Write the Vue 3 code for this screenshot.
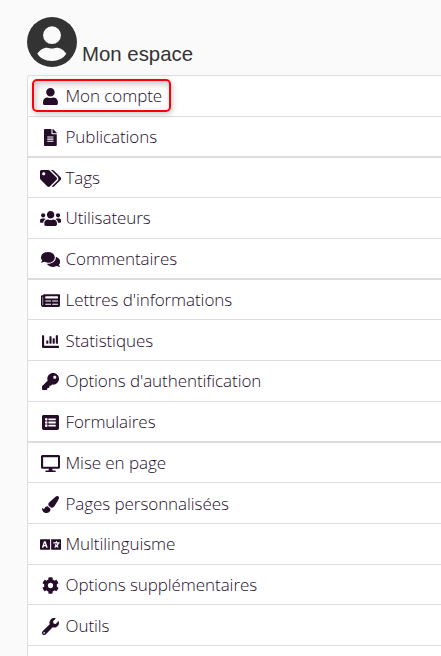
<template>
  <div class="page">
    <header class="header">
      <svg class="avatar" viewBox="0 0 50 50">
        <circle cx="25" cy="25" r="25" fill="#333" />
        <circle cx="25" cy="18.2" r="8.9" fill="#fafafa" />
        <path d="M10.300 36.800C12.500 33.200 16 30.700 20 30.700c2 0 3 .8 4.800 .8s2.800-.8 4.800-.8c4 0 7.500 2.500 9.700 6.100C36.500 41.300 31.500 44 24.800 44S13.100 41.300 10.300 36.800z" fill="#fafafa" />
      </svg>
      <h1 class="title">Mon espace</h1>
    </header>

    <nav class="list-group">
      <a
        v-for="item in items"
        :key="item.label"
        href="#"
        :class="['list-item', { thick: item.thick, short: item.short, low: item.low }]"
        @click.prevent="current = item.label"
      >
        <span :class="['entry', { highlight: item.label === current }]">
          <span class="icon">
            <svg :viewBox="`0 0 ${item.width} 512`" :style="{ width: item.width / 512 + 'em' }">
              <path :d="item.path" />
            </svg>
          </span>
          <span class="label">{{ item.label }}</span>
        </span>
      </a>
    </nav>
  </div>
</template>

<script setup>
import { ref } from 'vue'

const current = ref('Mon compte')

const items = [
  {
    label: 'Mon compte',
    width: 448,
    path: 'M224 256c70.7 0 128-57.3 128-128S294.7 0 224 0 96 57.3 96 128s57.3 128 128 128zm89.600 32h-16.700c-22.200 10.200-46.900 16-72.900 16s-50.600-5.800-72.900-16h-16.700C60.200 288 0 348.200 0 422.400V464c0 26.500 21.500 48 48 48h352c26.500 0 48-21.500 48-48v-41.600c0-74.200-60.200-134.400-134.400-134.400z'
  },
  {
    label: 'Publications',
    width: 384,
    thick: true,
    path: 'M224 136V0H24C10.7 0 0 10.7 0 24v464c0 13.3 10.7 24 24 24h336c13.3 0 24-10.7 24-24V160H248c-13.2 0-24-10.8-24-24zm64 236c0 6.6-5.4 12-12 12H108c-6.6 0-12-5.4-12-12v-8c0-6.6 5.4-12 12-12h168c6.6 0 12 5.4 12 12v8zm0-64c0 6.6-5.4 12-12 12H108c-6.6 0-12-5.4-12-12v-8c0-6.6 5.4-12 12-12h168c6.6 0 12 5.4 12 12v8zm0-72v8c0 6.6-5.4 12-12 12H108c-6.6 0-12-5.4-12-12v-8c0-6.6 5.4-12 12-12h168c6.6 0 12 5.4 12 12zm96-114.1v6.1H256V0h6.1c6.4 0 12.5 2.5 17 7l97.9 98c4.5 4.5 7 10.6 7 16.9z'
  },
  {
    label: 'Tags',
    width: 640,
    short: true,
    path: 'M497.941 225.941L286.059 14.059A48 48 0 0 0 252.118 0H48C21.49 0 0 21.49 0 48v204.118a48 48 0 0 0 14.059 33.941l211.882 211.882c18.744 18.745 49.136 18.746 67.882 0l204.118-204.118c18.745-18.745 18.745-49.137 0-67.882zM112 160c-26.51 0-48-21.49-48-48s21.49-48 48-48 48 21.49 48 48-21.49 48-48 48zm513.941 133.823L421.823 497.941c-18.745 18.745-49.137 18.745-67.882 0l-.36-.36L527.64 323.522c16.999-16.999 26.36-39.6 26.36-63.64s-9.362-46.641-26.36-63.64L331.397 0h48.721a48 48 0 0 1 33.941 14.059l211.882 211.882c18.745 18.745 18.745 49.137 0 67.882z'
  },
  {
    label: 'Utilisateurs',
    width: 640,
    path: 'M96 224c35.3 0 64-28.7 64-64s-28.7-64-64-64-64 28.7-64 64 28.7 64 64 64zm448 0c35.3 0 64-28.7 64-64s-28.7-64-64-64-64 28.7-64 64 28.7 64 64 64zm32 32h-64c-17.6 0-33.5 7.1-45.1 18.6 40.3 22.1 68.9 62 75.1 109.4h66c17.7 0 32-14.3 32-32v-32c0-35.3-28.7-64-64-64zm-256 0c61.9 0 112-50.1 112-112S381.9 32 320 32 208 82.1 208 144s50.1 112 112 112zm76.8 32h-8.3c-20.8 10-43.9 16-68.5 16s-47.6-6-68.5-16h-8.3C179.6 288 128 339.6 128 403.2V432c0 26.5 21.5 48 48 48h288c26.5 0 48-21.5 48-48v-28.8c0-63.6-51.6-115.2-115.2-115.2zm-223.7-13.4C161.5 263.1 145.6 256 128 256H64c-35.3 0-64 28.7-64 64v32c0 17.7 14.3 32 32 32h65.9c6.3-47.4 34.9-87.3 75.2-109.4z'
  },
  {
    label: 'Commentaires',
    width: 576,
    thick: true,
    path: 'M416 192c0-88.4-93.1-160-208-160S0 103.6 0 192c0 34.3 14.1 65.9 38 92-13.4 30.2-35.5 54.2-35.8 54.5-2.2 2.3-2.8 5.7-1.5 8.7S4.8 352 8 352c36.6 0 66.9-12.3 88.7-25 32.2 15.7 70.3 25 111.3 25 114.9 0 208-71.6 208-160zm122 220c23.9-26 38-57.7 38-92 0-66.9-53.5-124.2-129.3-148.1.9 6.6 1.3 13.3 1.3 20.1 0 105.9-107.7 192-240 192-10.8 0-21.3-.8-31.7-1.9C207.8 439.6 281.8 480 368 480c41 0 79.1-9.2 111.3-25 21.8 12.7 52.1 25 88.7 25 3.2 0 6.1-1.9 7.3-4.8 1.3-2.9.7-6.3-1.5-8.7-.3-.3-22.4-24.2-35.8-54.5z'
  },
  {
    label: "Lettres d'informations",
    width: 576,
    short: true,
    path: 'M552 64H88c-13.255 0-24 10.745-24 24v8H24c-13.255 0-24 10.745-24 24v272c0 30.928 25.072 56 56 56h472c26.51 0 48-21.49 48-48V88c0-13.255-10.745-24-24-24zM56 400a8 8 0 0 1-8-8V144h16v248a8 8 0 0 1-8 8zM292 384H140a12 12 0 0 1-12-12v-8a12 12 0 0 1 12-12h152a12 12 0 0 1 12 12v8a12 12 0 0 1-12 12zM500 384H348a12 12 0 0 1-12-12v-8a12 12 0 0 1 12-12h152a12 12 0 0 1 12 12v8a12 12 0 0 1-12 12zM292 288H140a12 12 0 0 1-12-12v-8a12 12 0 0 1 12-12h152a12 12 0 0 1 12 12v8a12 12 0 0 1-12 12zM500 288H348a12 12 0 0 1-12-12v-8a12 12 0 0 1 12-12h152a12 12 0 0 1 12 12v8a12 12 0 0 1-12 12zM500 192H140a12 12 0 0 1-12-12v-40a12 12 0 0 1 12-12h360a12 12 0 0 1 12 12v40a12 12 0 0 1-12 12z'
  },
  {
    label: 'Statistiques',
    width: 512,
    low: true,
    path: 'M332.8 320h38.4c6.4 0 12.8-6.4 12.8-12.8V172.8c0-6.4-6.4-12.8-12.8-12.8h-38.4c-6.4 0-12.8 6.4-12.8 12.8v134.4c0 6.4 6.4 12.8 12.8 12.8zm96 0h38.4c6.4 0 12.8-6.4 12.8-12.8V76.8c0-6.4-6.4-12.8-12.8-12.8h-38.4c-6.4 0-12.8 6.4-12.8 12.8v230.4c0 6.4 6.4 12.8 12.8 12.8zm-288 0h38.4c6.4 0 12.8-6.4 12.8-12.8v-70.4c0-6.4-6.4-12.8-12.8-12.8h-38.4c-6.4 0-12.8 6.4-12.8 12.8v70.4c0 6.4 6.4 12.8 12.8 12.8zm96 0h38.4c6.4 0 12.8-6.4 12.8-12.8V108.8c0-6.4-6.4-12.8-12.8-12.8h-38.4c-6.4 0-12.8 6.4-12.8 12.8v198.4c0 6.4 6.4 12.8 12.8 12.8zM496 384H64V80c0-8.84-7.16-16-16-16H16C7.16 64 0 71.16 0 80v336c0 17.67 14.33 32 32 32h464c8.84 0 16-7.16 16-16v-32c0-8.84-7.16-16-16-16z'
  },
  {
    label: "Options d'authentification",
    width: 512,
    path: 'M512 176.001C512 273.203 433.202 352 336 352c-11.22 0-22.19-1.062-32.827-3.069l-24.012 27.014A23.999 23.999 0 0 1 261.223 384H224v40c0 13.255-10.745 24-24 24h-40v40c0 13.255-10.745 24-24 24H24c-13.255 0-24-10.745-24-24v-78.059c0-6.365 2.529-12.47 7.029-16.971l161.802-161.802C163.108 213.814 160 195.271 160 176 160 78.798 238.797.001 335.999 0 433.488-.001 512 78.511 512 176.001zM336 128c0 26.51 21.49 48 48 48s48-21.49 48-48-21.49-48-48-48-48 21.49-48 48z'
  },
  {
    label: 'Formulaires',
    width: 512,
    thick: true,
    path: 'M464 480H48c-26.51 0-48-21.49-48-48V80c0-26.51 21.49-48 48-48h416c26.51 0 48 21.49 48 48v352c0 26.51-21.49 48-48 48zM128 120a40 40 0 1 0 0 80 40 40 0 0 0 0-80zm0 96a40 40 0 1 0 0 80 40 40 0 0 0 0-80zm0 96a40 40 0 1 0 0 80 40 40 0 0 0 0-80zM416 176v-32a12 12 0 0 0-12-12H204a12 12 0 0 0-12 12v32a12 12 0 0 0 12 12h200a12 12 0 0 0 12-12zm0 96v-32a12 12 0 0 0-12-12H204a12 12 0 0 0-12 12v32a12 12 0 0 0 12 12h200a12 12 0 0 0 12-12zm0 96v-32a12 12 0 0 0-12-12H204a12 12 0 0 0-12 12v32a12 12 0 0 0 12 12h200a12 12 0 0 0 12-12z'
  },
  {
    label: 'Mise en page',
    width: 576,
    short: true,
    path: 'M528 0H48C21.5 0 0 21.5 0 48v320c0 26.5 21.5 48 48 48h192l-16 48h-72c-13.3 0-24 10.7-24 24s10.7 24 24 24h272c13.3 0 24-10.7 24-24s-10.7-24-24-24h-72l-16-48h192c26.5 0 48-21.5 48-48V48c0-26.5-21.5-48-48-48zm-16 352H64V64h448v288z'
  },
  {
    label: 'Pages personnalisées',
    width: 512,
    low: true,
    path: 'M167.02 309.34c-40.12 2.58-76.53 17.86-97.19 72.3-2.35 6.21-8 9.98-14.59 9.98-11.11 0-45.46-27.67-55.25-34.35C0 439.62 37.93 512 128 512c75.86 0 128-43.77 128-120.19 0-3.11-.65-6.08-.97-9.13l-88.01-73.34zM457.89 0c-15.16 0-29.37 6.71-40.21 16.45C213.27 199.05 192 203.34 192 257.09c0 13.7 3.25 26.76 8.73 38.7l63.82 53.18c7.21 1.8 14.64 3.03 22.39 3.03 62.11 0 98.11-45.47 211.16-256.46 7.38-14.35 13.9-29.85 13.9-45.99C512 20.64 486 0 457.89 0z'
  },
  {
    label: 'Multilinguisme',
    width: 640,
    path: 'M152.1 236.2c-3.5-12.1-7.8-33.2-7.8-33.2h-.5s-4.3 21.1-7.8 33.2l-11.1 37.5H163zM616 96H336v320h280c13.3 0 24-10.7 24-24V120c0-13.3-10.7-24-24-24zm-24 120c0 6.6-5.4 12-12 12h-11.4c-6.9 23.6-21.7 47.4-42.7 69.9 8.4 6.4 17.1 12.5 26.1 18 5.5 3.4 7.3 10.5 4.1 16.2l-7.9 13.9c-3.4 5.9-10.9 7.8-16.7 4.3-12.6-7.8-24.5-16.1-35.4-24.9-10.9 8.7-22.7 17.1-35.4 24.9-5.8 3.5-13.3 1.6-16.7-4.3l-7.9-13.9c-3.2-5.6-1.4-12.8 4.2-16.2 9.3-5.7 18-11.7 26.1-18-7.9-8.4-14.9-17-21-25.7-4-5.7-2.2-13.6 3.7-17.1l6.5-3.9 7.3-4.3c5.4-3.2 12.4-1.7 16 3.4 5 7 10.8 14 17.4 20.9 13.5-14.2 23.8-28.9 30-43.2H412c-6.6 0-12-5.4-12-12v-16c0-6.6 5.4-12 12-12h64v-16c0-6.6 5.4-12 12-12h16c6.6 0 12 5.4 12 12v16h64c6.6 0 12 5.4 12 12zM0 120v272c0 13.3 10.7 24 24 24h280V96H24c-13.3 0-24 10.7-24 24zm58.9 216.1L116.4 167c1.7-4.9 6.2-8.1 11.4-8.1h32.5c5.1 0 9.7 3.3 11.4 8.1l57.5 169.1c2.6 7.8-3.1 15.9-11.4 15.9h-22.9a12 12 0 0 1-11.5-8.6l-9.4-31.9h-60.2l-9.1 31.8c-1.5 5.1-6.2 8.7-11.5 8.7H70.3c-8.2 0-14-8.1-11.4-15.9z'
  },
  {
    label: 'Options supplémentaires',
    width: 512,
    short: true,
    path: 'M487.4 315.7l-42.6-24.6c4.3-23.2 4.3-47 0-70.2l42.6-24.6c4.9-2.8 7.1-8.6 5.5-14-11.1-35.6-30-67.8-54.7-94.6-3.8-4.1-10-5.1-14.8-2.3L380.8 110c-17.9-15.4-38.5-27.3-60.8-35.1V25.8c0-5.6-3.9-10.5-9.4-11.7-36.7-8.2-74.3-7.8-109.2 0-5.5 1.2-9.4 6.1-9.4 11.7V75c-22.2 7.9-42.8 19.8-60.8 35.1L88.7 85.5c-4.9-2.8-11-1.9-14.8 2.3-24.7 26.7-43.6 58.9-54.7 94.6-1.7 5.4.6 11.2 5.5 14L67.3 221c-4.3 23.2-4.3 47 0 70.2l-42.6 24.6c-4.9 2.8-7.1 8.6-5.5 14 11.1 35.6 30 67.8 54.7 94.6 3.8 4.1 10 5.1 14.8 2.3l42.6-24.6c17.9 15.4 38.5 27.3 60.8 35.1v49.2c0 5.6 3.9 10.5 9.4 11.7 36.7 8.2 74.3 7.8 109.2 0 5.5-1.2 9.4-6.1 9.4-11.7v-49.2c22.2-7.9 42.8-19.8 60.8-35.1l42.6 24.6c4.9 2.8 11 1.9 14.8-2.3 24.7-26.7 43.6-58.9 54.7-94.6 1.5-5.5-.7-11.3-5.6-14.1zM256 336c-44.1 0-80-35.9-80-80s35.9-80 80-80 80 35.9 80 80-35.9 80-80 80z'
  },
  {
    label: 'Outils',
    width: 512,
    low: true,
    path: 'M507.73 109.1c-2.24-9.03-13.54-12.09-20.12-5.51l-74.36 74.36-67.88-11.31-11.31-67.88 74.36-74.36c6.62-6.62 3.43-17.9-5.66-20.16-47.38-11.74-99.55.91-136.58 37.93-39.64 39.64-50.55 97.1-34.05 147.2L18.74 402.76c-24.99 24.99-24.99 65.51 0 90.5 24.99 24.99 65.51 24.99 90.5 0l213.21-213.21c50.12 16.71 107.47 5.68 147.37-34.22 37.07-37.07 49.7-89.32 37.91-136.73zM64 472c-13.25 0-24-10.75-24-24 0-13.26 10.75-24 24-24s24 10.74 24 24c0 13.25-10.75 24-24 24z'
  }
]
</script>

<style>
body {
  background: #fafafa;
}
</style>

<style scoped>
.page {
  box-sizing: border-box;
  height: 656px;
  padding: 17px 0 0 27px;
  overflow: hidden;
  display: flex;
  flex-direction: column;
  background: #fafafa;
}

/* En-tête */
.header {
  display: flex;
  align-items: flex-start;
  gap: 5px;
  height: 58px;
  flex-shrink: 0;
}

.avatar {
  width: 50px;
  height: 50px;
}

.title {
  margin: 0;
  padding-top: 25px;
  font: 400 20.4px/24px 'Liberation Sans', Arial, sans-serif;
  color: #333;
}

/* Liste */
.list-group {
  flex: 1;
  min-height: 0;
  border: 1px solid #ddd;
  border-width: 1px 0 0 1px;
  border-top-left-radius: 4px;
  background: #fff;
}

.list-item {
  display: flex;
  align-items: flex-start;
  box-sizing: border-box;
  height: 41px;
  padding: 3px 0 0 4px;
  border-bottom: 1px solid #ddd;
  color: #250d2a;
  text-decoration: none;
  font: 300 17px/24px 'Open Sans', sans-serif;
  letter-spacing: -0.07px;
}

.list-item.thick { border-bottom-width: 2px; }
.list-item.short { height: 40px; }
.list-item.low { padding-top: 4px; }

.entry {
  display: flex;
  align-items: center;
  box-sizing: border-box;
  height: 33px;
  padding: 1px 7px 0 6px;
  border: 2px solid transparent;
  border-radius: 5px;
}

.entry.highlight {
  border-color: #fb0007;
  box-shadow: 1px 2px 6px rgba(0, 0, 0, 0.22), inset 2px 3px 7px rgba(0, 0, 0, 0.22);
}

.icon {
  display: flex;
  justify-content: center;
  width: 21px;
  margin-right: 4.5px;
}

.icon svg {
  display: block;
  flex-shrink: 0;
  height: 1em;
  fill: currentColor;
}

.label { white-space: nowrap; }
</style>
